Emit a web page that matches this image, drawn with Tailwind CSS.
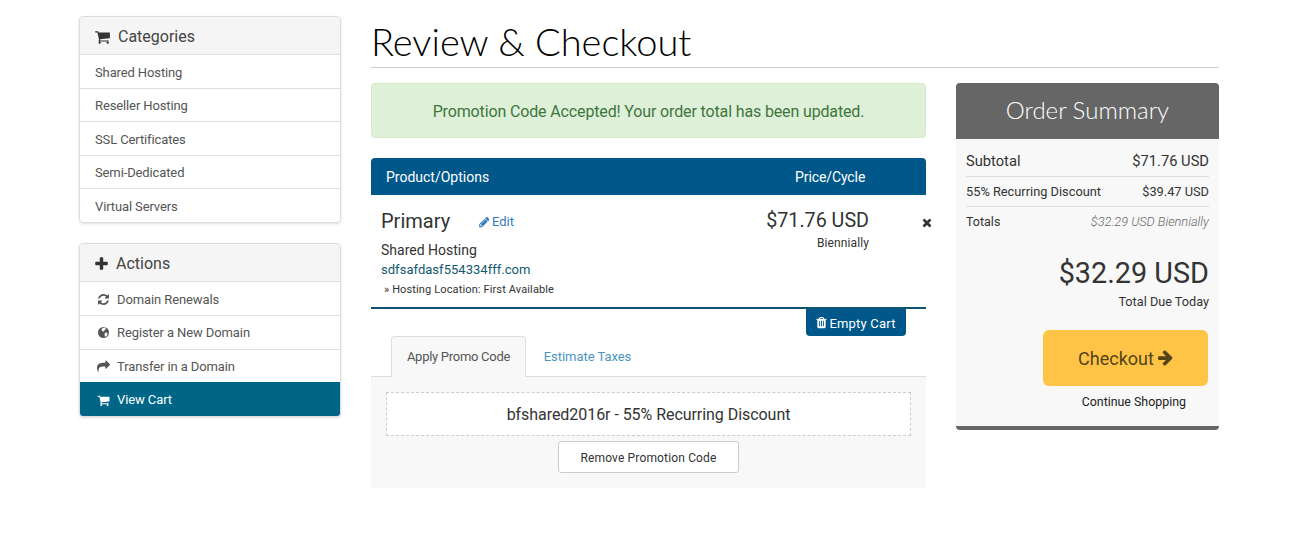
<!DOCTYPE html>
<html lang="en">
<head>
    <meta charset="UTF-8">
    <title>Review & Checkout</title>
    <script src="https://cdn.jsdelivr.net/npm/@tailwindcss/browser@4"></script>
</head>
<body class="bg-white font-['Roboto',sans-serif] text-[#333] overflow-hidden">
    <div class="flex gap-[30px] pt-4 pl-[79px] w-[1219px]">
        <!-- sidebar -->
        <aside class="w-[262px] shrink-0 flex flex-col gap-[20px]">
            <div class="h-[207px] border border-[#ddd] rounded shadow-sm overflow-hidden">
                <div class="h-[38px] bg-[#f5f5f5] border-b border-[#ddd] flex items-center pl-[15px] pt-[2px] text-[16px] text-[#444]">
                    <svg class="w-[15px] h-4 mr-2 fill-[#333]" viewBox="0 0 1664 1792"><path d="M640 1536q0 52-38 90t-90 38-90-38-38-90 38-90 90-38 90 38 38 90zm896 0q0 52-38 90t-90 38-90-38-38-90 38-90 90-38 90 38 38 90zm128-1088v512q0 24-16.5 42.5t-40.5 21.5l-1044 122q13 60 13 70 0 16-24 64h920q26 0 45 19t19 45-19 45-45 19h-1024q-26 0-45-19t-19-45q0-11 8-31.5t16-36 21.5-40 15.5-29.5l-177-823h-204q-26 0-45-19t-19-45 19-45 45-19h256q16 0 28.5 6.5t19.5 15.5 13 24.5 8 26 5.5 29.5 4.5 26h1201q26 0 45 19t19 45z"/></svg>
                    Categories
                </div>
                <div class="text-[13px] text-[#555] tracking-[-0.12px]">
                    <div class="h-[33.5px] flex items-center pl-[15px] pt-[2px] border-b border-[#ddd]">Shared Hosting</div>
                    <div class="h-[33.5px] flex items-center pl-[15px] pt-[2px] border-b border-[#ddd]">Reseller Hosting</div>
                    <div class="h-[33.5px] flex items-center pl-[15px] pt-[2px] border-b border-[#ddd]">SSL Certificates</div>
                    <div class="h-[33.5px] flex items-center pl-[15px] pt-[2px] border-b border-[#ddd]">Semi-Dedicated</div>
                    <div class="h-[33.5px] flex items-center pl-[15px] pt-[2px]">Virtual Servers</div>
                </div>
            </div>
            <div class="h-[174px] border border-[#ddd] rounded shadow-sm overflow-hidden">
                <div class="h-[38px] bg-[#f5f5f5] border-b border-[#ddd] flex items-center pl-[15px] pt-[2px] text-[16px] text-[#444]">
                    <svg class="w-[13px] h-4 mr-2 fill-[#333]" viewBox="0 0 1408 1792"><path d="M1408 736v192q0 40-28 68t-68 28h-416v416q0 40-28 68t-68 28h-192q-40 0-68-28t-28-68v-416h-416q-40 0-68-28t-28-68v-192q0-40 28-68t68-28h416v-416q0-40 28-68t68-28h192q40 0 68 28t28 68v416h416q40 0 68 28t28 68z"/></svg>
                    Actions
                </div>
                <div class="text-[13px] text-[#555] tracking-[-0.1px]">
                    <div class="h-[33.5px] flex items-center pl-[18px] pt-[3px] border-b border-[#ddd]">
                        <svg class="w-[11px] h-[13px] mr-2 fill-[#555]" viewBox="0 0 1536 1792"><path d="M1511 1056q0 5-1 7-64 268-268 434.5t-478 166.5q-146 0-282.5-55t-243.5-157l-129 129q-19 19-45 19t-45-19-19-45v-448q0-26 19-45t45-19h448q26 0 45 19t19 45-19 45l-137 137q71 66 161 102t187 36q134 0 250-65t186-179q11-17 53-117 8-23 30-23h192q13 0 22.5 9.5t9.5 22.5zm25-800v448q0 26-19 45t-45 19h-448q-26 0-45-19t-19-45 19-45l138-138q-148-137-349-137-134 0-250 65t-186 179q-11 17-53 117-8 23-30 23h-199q-13 0-22.5-9.5t-9.5-22.5v-7q65-268 270-434.5t480-166.5q146 0 284 55.5t245 156.5l130-129q19-19 45-19t45 19 19 45z"/></svg>
                        Domain Renewals
                    </div>
                    <div class="h-[34px] flex items-center pl-[18px] pt-[1px] border-b border-[#ddd]">
                        <svg class="w-[11px] h-[13px] mr-2" viewBox="0 0 22 26"><circle cx="11" cy="13" r="11" fill="#555"/><path d="M9 4l5-1 2 3-3 2-1 3-4-1-1-3zM14 13l5 1-1 5-3 3-2-4z" fill="#fff"/></svg>
                        Register a New Domain
                    </div>
                    <div class="h-[32.5px] flex items-center pl-[17px] pt-[2px]">
                        <svg class="w-[13px] h-[13px] mr-[7px] fill-[#555]" viewBox="0 0 1792 1792"><path d="M1792 640q0 26-19 45l-512 512q-19 19-45 19t-45-19-19-45v-256h-224q-98 0-175.5 6t-154 21.5-133 42.5-105.5 69.5-80 101-48.5 138.5-17.5 181q0 55 5 123 0 6 2.5 23.5t2.5 26.5q0 15-8.5 25t-23.5 10q-16 0-28-17-7-9-13-22t-13.5-30-10.5-24q-127-285-127-451 0-199 53-333 162-403 875-403h224v-256q0-26 19-45t45-19 45 19l512 512q19 19 19 45z"/></svg>
                        Transfer in a Domain
                    </div>
                    <div class="h-[34px] flex items-center pl-[17px] pt-[2px] bg-[#006687] text-white">
                        <svg class="w-[13px] h-[13px] mr-[7px] fill-white" viewBox="0 0 1664 1792"><path d="M640 1536q0 52-38 90t-90 38-90-38-38-90 38-90 90-38 90 38 38 90zm896 0q0 52-38 90t-90 38-90-38-38-90 38-90 90-38 90 38 38 90zm128-1088v512q0 24-16.5 42.5t-40.5 21.5l-1044 122q13 60 13 70 0 16-24 64h920q26 0 45 19t19 45-19 45-45 19h-1024q-26 0-45-19t-19-45q0-11 8-31.5t16-36 21.5-40 15.5-29.5l-177-823h-204q-26 0-45-19t-19-45 19-45 45-19h256q16 0 28.5 6.5t19.5 15.5 13 24.5 8 26 5.5 29.5 4.5 26h1201q26 0 45 19t19 45z"/></svg>
                        View Cart
                    </div>
                </div>
            </div>
        </aside>

        <!-- main -->
        <main class="flex-1">
            <h1 class="h-[52px] border-b border-[#ccc] font-['Lato',sans-serif] font-light text-[38px] leading-[50px] text-black">Review &amp; Checkout</h1>
            <div class="flex gap-[30px] mt-[15px]">
                <div class="w-[555px]">
                    <div class="h-[55px] bg-[#dff0d8] border border-[#d6e9c6] rounded flex items-center justify-center pt-[2px] text-[16px] tracking-[-0.14px] text-[#3c763d]">Promotion Code Accepted! Your order total has been updated.</div>

                    <div class="mt-5 h-[37px] bg-[#00588a] rounded-t flex items-center pt-[2px] text-[14px] text-white pl-[15px]">
                        <span class="w-[409px]">Product/Options</span>
                        <span class="tracking-[-0.1px]">Price/Cycle</span>
                    </div>
                    <div class="relative h-[114px] border-b-2 border-[#0f5470] flex justify-between">
                        <div class="pl-[10px] pt-[13px]">
                            <div class="flex items-center h-[26px]">
                                <span class="text-[20px] text-[#333] w-[97px]">Primary</span>
                                <svg class="w-[11px] h-[12px] mr-[3px] mt-[2px] fill-[#337ab7]" viewBox="0 0 1536 1792"><path d="M491 1536l91-91-235-235-91 91v107h128v128h107zm523-928q0-22-22-22-10 0-17 7l-542 542q-7 7-7 17 0 22 22 22 10 0 17-7l542-542q7-7 7-17zm-54-192l416 416-832 832h-416v-416zm683 96q0 53-37 90l-166 166-416-416 166-165q36-38 90-38 53 0 91 38l235 234q37 39 37 91z"/></svg>
                                <span class="text-[13px] mt-[2px] text-[#337ab7]">Edit</span>
                            </div>
                            <div class="mt-[6px] text-[14px] leading-[20px] text-[#333]">Shared Hosting</div>
                            <div class="text-[13px] leading-[19px] text-[#0f5a70] tracking-[0.03px]">sdfsafdasf554334fff.com</div>
                            <div class="pl-[3px] mt-[2px] text-[11px] leading-[17px] text-[#333] tracking-[0.13px]">» Hosting Location: First Available</div>
                        </div>
                        <div class="pr-[57px] pt-[14px] text-right">
                            <div class="text-[19.7px] leading-[24px] text-[#333]">$71.76 USD</div>
                            <div class="text-[12px] leading-[18px] text-[#333] mt-[1px] tracking-[0.1px]">Biennially</div>
                        </div>
                        <svg class="absolute left-[551px] top-[21px] w-[10px] h-[13px] fill-[#333]" viewBox="0 0 1408 1792"><path d="M1298 1322q0 40-28 68l-136 136q-28 28-68 28t-68-28l-294-294-294 294q-28 28-68 28t-68-28l-136-136q-28-28-28-68t28-68l294-294-294-294q-28-28-28-68t28-68l136-136q28-28 68-28t68 28l294 294 294-294q28-28 68-28t68 28l136 136q28 28 28 68t-28 68l-294 294 294 294q28 28 28 68z"/></svg>
                    </div>
                    <div class="flex justify-end pr-5">
                        <div class="w-[100px] h-[27px] bg-[#00588a] rounded-b flex items-center justify-center pt-[2px] text-[13px] text-white tracking-[0.2px]">
                            <svg class="w-[11px] h-[13px] mr-[2px] fill-white" viewBox="0 0 1408 1792"><path d="M512 1248v-704q0-14-9-23t-23-9h-64q-14 0-23 9t-9 23v704q0 14 9 23t23 9h64q14 0 23-9t9-23zm256 0v-704q0-14-9-23t-23-9h-64q-14 0-23 9t-9 23v704q0 14 9 23t23 9h64q14 0 23-9t9-23zm256 0v-704q0-14-9-23t-23-9h-64q-14 0-23 9t-9 23v704q0 14 9 23t23 9h64q14 0 23-9t9-23zm-544-992h448l-48-117q-7-9-17-11h-317q-10 2-17 11zm928 32v64q0 14-9 23t-23 9h-96v948q0 83-47 143.5t-113 60.5h-832q-66 0-113-58.5t-47-141.5v-952h-96q-14 0-23-9t-9-23v-64q0-14 9-23t23-9h309l70-167q15-37 54-63t79-26h320q40 0 79 26t54 63l70 167h309q14 0 23 9t9 23z"/></svg>
                            Empty Cart
                        </div>
                    </div>
                    <div class="h-[41px] flex pl-5 border-b border-[#ddd] text-[13px]">
                        <div class="w-[135px] h-[41px] bg-[#f8f8f8] border border-b-0 border-[#ddd] rounded-t flex items-center justify-center text-[#555] tracking-[-0.28px]">Apply Promo Code</div>
                        <div class="w-[123px] h-[41px] flex items-center justify-center text-[#4a96c0] tracking-[-0.05px]">Estimate Taxes</div>
                    </div>
                    <div class="h-[111px] bg-[#f8f8f8] px-[15px] pt-[15px]">
                        <div class="h-[44px] bg-white border border-dashed border-[#ccc] flex items-center justify-center pt-[2px] text-[16px] tracking-[-0.05px] text-[#333]">bfshared2016r - 55% Recurring Discount</div>
                        <div class="flex justify-center mt-[5px]">
                            <div class="w-[181px] h-[32px] bg-white border border-[#ccc] rounded-[3px] flex items-center justify-center pt-[2px] text-[12px] tracking-[0.15px] text-[#333]">Remove Promotion Code</div>
                        </div>
                    </div>
                </div>

                <!-- order summary -->
                <div class="w-[263px] h-[347px] bg-[#f8f8f8] border-b-4 border-[#666] rounded">
                    <div class="h-[56px] bg-[#666] rounded-t flex items-center justify-center pb-[2px] font-['Lato',sans-serif] font-light text-[24px] text-white">Order Summary</div>
                    <div class="px-[10px]">
                        <div class="h-[38px] flex items-center justify-between border-b border-[#ddd] pt-[7px] text-[14.7px]">
                            <span>Subtotal</span><span>$71.76 USD</span>
                        </div>
                        <div class="h-[30px] flex items-center justify-between border-b border-[#ddd] text-[12.8px]">
                            <span>55% Recurring Discount</span><span>$39.47 USD</span>
                        </div>
                        <div class="h-[30px] flex items-center justify-between text-[12px]">
                            <span class="text-[12.5px]">Totals</span><span class="italic font-light text-[12.75px] text-[#666]">$32.29 USD Biennially</span>
                        </div>
                        <div class="mt-[18px] text-right text-[28.8px] leading-[36px] text-[#333]">$32.29 USD</div>
                        <div class="mt-[2px] text-right text-[12.7px] leading-[18px] text-[#333]">Total Due Today</div>
                        <div class="flex justify-end mt-[19px] pr-px">
                            <div class="w-[165px] h-[56px] bg-[#ffc445] rounded-md flex items-center justify-center text-[18px] text-[#54431a]">
                                Checkout
                                <svg class="w-[15px] h-[18px] ml-1 fill-[#54431a]" viewBox="0 0 1536 1792"><path d="M1472 960q0 54-37 91l-651 651q-39 37-91 37-51 0-90-37l-75-75q-38-38-38-91t38-91l293-293h-704q-52 0-84.5-37.5t-32.5-90.5v-128q0-53 32.5-90.5t84.5-37.5h704l-293-294q-38-36-38-90t38-90l75-75q38-38 90-38 53 0 91 38l651 651q37 35 37 90z" transform="translate(0 -64)"/></svg>
                            </div>
                        </div>
                        <div class="flex justify-end mt-[7px] pr-[23px]"><span class="text-[12.4px] leading-[18px] text-[#222]">Continue Shopping</span></div>
                    </div>
                </div>
            </div>
        </main>
    </div>
</body>
</html>
